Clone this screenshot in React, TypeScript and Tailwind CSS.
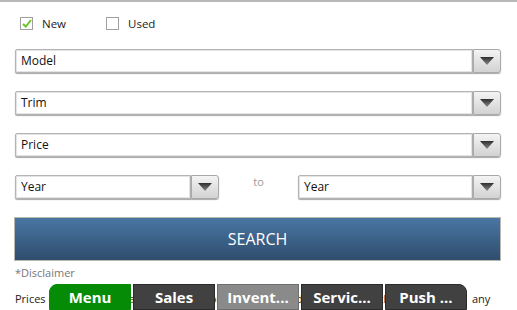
import React from 'react';

const font = { fontFamily: '"Open Sans", "Noto Sans", sans-serif' };

function Arrow() {
  return (
    <div className="flex h-full w-[28px] shrink-0 items-center justify-center rounded-r-[3px] border border-[#a9a9a9] bg-gradient-to-b from-[#f4f4f4] to-[#d2d2d2] shadow-[0_1px_1px_rgba(0,0,0,0.35)]">
      <svg width="14" height="8" viewBox="0 0 14 8">
        <defs>
          <linearGradient id="tri" x1="0" y1="0" x2="0" y2="1">
            <stop offset="0" stopColor="#2e2e2e" />
            <stop offset="1" stopColor="#8a8a8a" />
          </linearGradient>
        </defs>
        <path d="M0 0 H14 L7 8 Z" fill="url(#tri)" />
      </svg>
    </div>
  );
}

function Select({ label, className = '' }: { label: string; className?: string }) {
  return (
    <div className={`flex h-[24px] ${className}`}>
      <div className="flex min-w-0 flex-1 items-center rounded-l-[2px] border border-[#b4b4b4] bg-white pl-[5px] text-[12px] text-[#111] shadow-[inset_0_0_0_1px_#e4e4e4,0_1px_1px_rgba(0,0,0,0.35)]">
        {label}
      </div>
      <Arrow />
    </div>
  );
}

function Check({ label, checked }: { label: string; checked?: boolean }) {
  return (
    <div className="flex items-center gap-[9px]">
      <div className="flex h-[13px] w-[13px] items-center justify-center border border-[#a0a0a0] bg-white">
        {checked && (
          <svg width="10" height="9" viewBox="0 0 10 9">
            <path d="M1 5 L3.8 7.6 L9 1" fill="none" stroke="#6cc32a" strokeWidth="2" />
          </svg>
        )}
      </div>
      <span className="text-[11.5px] text-[#222]">{label}</span>
    </div>
  );
}

const tabs = [
  { label: 'Menu', bg: 'bg-[#058b05]', extra: 'rounded-tl-[8px] border-[#058b05]' },
  { label: 'Sales', bg: 'bg-[#414141]', extra: 'border-[#2a2a2a]' },
  { label: 'Invent...', bg: 'bg-[#8a8a8a]', extra: 'border-[#6e6e6e]' },
  { label: 'Servic...', bg: 'bg-[#414141]', extra: 'border-[#2a2a2a]' },
  { label: 'Push ...', bg: 'bg-[#414141]', extra: 'rounded-tr-[8px] border-[#2a2a2a]' },
];

export default function App() {
  return (
    <div className="relative h-[310px] w-[517px] overflow-hidden bg-white" style={font}>
      <div className="h-[2px] w-full bg-[#b9b9b9]" />
      <div className="flex flex-col pl-[15px] pr-[16px]">
        <div className="mt-[13px] flex gap-[40px] pl-[5px]">
          <Check label="New" checked />
          <Check label="Used" />
        </div>
        <Select label="Model" className="mt-[17px]" />
        <Select label="Trim" className="mt-[18px]" />
        <Select label="Price" className="mt-[18px]" />
        <div className="mt-[18px] flex items-start">
          <Select label="Year" className="w-[204px]" />
          <span className="w-[79px] text-center text-[11px] leading-[14px] text-[#999]">to</span>
          <Select label="Year" className="w-[203px]" />
        </div>
        <button className="mt-[18px] -ml-[1px] flex h-[44px] items-center justify-center border border-[#b8b8b0] bg-gradient-to-b from-[#4a76a3] to-[#2f4e6e] text-[16px] text-white">
          SEARCH
        </button>
        <div className="mt-[4px] text-[11px] text-[#777]">*Disclaimer</div>
        <div className="mt-[9px] whitespace-nowrap text-[11px] text-[#222]">
          Prices do not include tax, title, license or dealer fees and are subject to change. See dealer for details any
        </div>
      </div>
      <div className="absolute bottom-0 left-[49px] flex gap-[2px]">
        {tabs.map((t) => (
          <div
            key={t.label}
            className={`flex h-[26px] w-[82px] items-center justify-center border pt-[1px] text-[15px] font-bold text-white ${t.bg} ${t.extra}`}
          >
            {t.label}
          </div>
        ))}
      </div>
      <div className="absolute bottom-0 left-[467px] h-[26px] w-[50px] bg-white pl-[5px] pt-[7px] text-[11px] text-[#222]">
        any
      </div>
    </div>
  );
}
